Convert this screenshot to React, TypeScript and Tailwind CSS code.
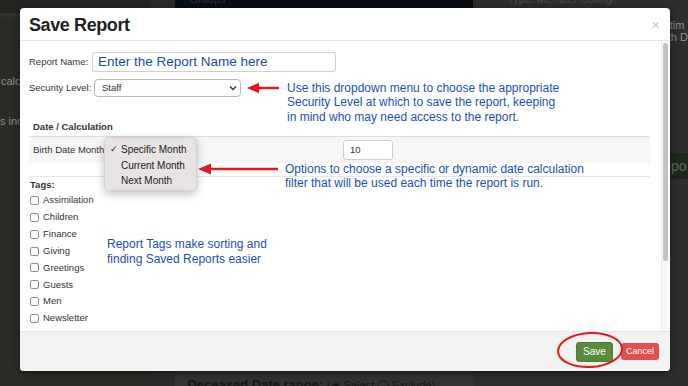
import React from "react";

const tags = ["Assimilation", "Children", "Finance", "Giving", "Greetings", "Guests", "Men", "Newsletter", "Outreach"];

export default function App() {
  return (
    <div className="relative w-[688px] h-[386px] overflow-hidden flex bg-[#2c2c2c] font-['Liberation_Sans',Arial,sans-serif]">
      {/* background page (dimmed) */}
      <div className="w-[153px] flex flex-col bg-[#2a2c28]">
        <div className="h-[13px] bg-[#232521]" />
        <div className="h-[4px] bg-[#30322e]" />
        <div className="mt-[57px] w-[20px] overflow-hidden pl-[1px] text-[11px] leading-[14px] text-[#8c8d88] whitespace-nowrap">calc</div>
        <div className="mt-[26px] w-[20px] overflow-hidden text-[11px] leading-[14px] text-[#8c8d88] whitespace-nowrap">s inc</div>
      </div>
      <div className="w-[25px] bg-[#2b2b2b]" />
      <div className="w-[302px] flex flex-col">
        <div className="h-[8px] bg-[#0a0e15] overflow-hidden">
          <div className="pl-[14px] -mt-[8px] text-[11px] leading-[14px] text-[#2c313a]">Groups</div>
        </div>
        <div className="flex-1 bg-[#333333] flex flex-col justify-end overflow-hidden">
          <div className="pl-[12px] -mb-[7px] whitespace-nowrap text-[13px] leading-[16px] text-[#161616]">
            <span className="font-bold">Deceased Date range:</span> <span className="text-[11px]">(◉ Select ◯ Exclude)</span>
          </div>
        </div>
      </div>
      <div className="flex-1 flex flex-col bg-[#2e2e2e]">
        <div className="h-[8px] overflow-hidden">
          <div className="pl-[34px] -mt-[8px] text-[11px] leading-[14px] text-[#4a4a4a]">Type: Member Listing</div>
        </div>
        <div className="mt-[11px] ml-[190px] overflow-hidden pl-[1px] text-[11px] leading-[12px] text-[#8f8f8f] whitespace-nowrap">l tim</div>
        <div className="ml-[190px] overflow-hidden pl-[1px] text-[11px] leading-[12px] text-[#8f8f8f] whitespace-nowrap">rth D</div>
        <div className="mt-[110px] h-[26px] bg-[#1c291b] flex items-center pl-[190px] overflow-hidden text-[14px] text-[#5f6b5c] whitespace-nowrap">epo</div>
      </div>

      {/* modal */}
      <div className="absolute left-[20px] top-[8px] w-[650px] h-[363px] bg-white rounded-[4px] shadow-[0_2px_8px_rgba(0,0,0,0.5)] flex flex-col overflow-hidden">
        <div className="h-[33px] border-b border-[#e5e5e5] flex items-center justify-between pl-[9px] pr-[10px]">
          <div className="text-[18px] font-bold text-[#222] tracking-[-0.4px] leading-[20px] pt-[1px]">Save Report</div>
          <div className="text-[15px] leading-[15px] text-[#c6c6c6]">×</div>
        </div>

        <div className="flex-1 min-h-0 flex">
          <div className="flex-1 overflow-hidden pl-[9px] pr-[11px] pt-[11px] text-[9.5px] text-[#333]">
            <div className="h-[20px] flex items-center">
              <span className="w-[63px] whitespace-nowrap">Report Name:</span>
              <div className="w-[244px] h-[20px] border border-[#cfcfcf] rounded-[3px] pl-[5px] flex items-center text-[13.5px] text-[#1b4aa8] whitespace-nowrap">
                Enter the Report Name here
              </div>
            </div>
            <div className="mt-[7px] h-[18px] flex items-center">
              <span className="w-[65px] whitespace-nowrap">Security Level:</span>
              <div className="w-[147px] h-[18px] border border-[#b9b9b9] rounded-[4px] pl-[7px] pr-[3px] flex items-center justify-between bg-[#fdfdfd]">
                <span>Staff</span>
                <svg width="8" height="6" viewBox="0 0 8 6">
                  <path d="M1 1.5 L4 4.5 L7 1.5" fill="none" stroke="#333" strokeWidth="1.4" />
                </svg>
              </div>
            </div>
            <div className="mt-[21px] h-[19px] border-b border-[#dedede] pl-[4px] flex items-center font-bold">Date / Calculation</div>
            <div className="h-[26px] bg-[#f6f6f6] flex items-center pl-[4px]">
              <span className="w-[310px] whitespace-nowrap">Birth Date Month</span>
              <div className="w-[50px] h-[20px] bg-white border border-[#cfcfcf] rounded-[3px] pl-[6px] flex items-center">10</div>
            </div>
            <div className="h-[14px] border-b border-[#e6e6e6]" />
            <div className="mt-[1px] h-[14px] pl-[1px] flex items-center font-bold">Tags:</div>
            {tags.map((t) => (
              <div key={t} className="h-[16.86px] flex items-center pl-[1px]">
                <div className="w-[9px] h-[9px] border border-[#8e8e8e] rounded-[2px] bg-white" />
                <span className="ml-[4px]">{t}</span>
              </div>
            ))}
          </div>
          <div className="w-[8px] mr-[1px] bg-[#f7f7f7] border-l border-[#ececec] pt-[2px] flex justify-center">
            <div className="w-[5px] h-[218px] rounded-full bg-[#c2c2c2]" />
          </div>
        </div>

        <div className="h-[40px] border-t border-[#e3e3e3] bg-[#f2f2f2] flex items-center justify-end pr-[11px] gap-[8px]">
          <div className="w-[37px] h-[20px] rounded-[3px] bg-[#5b8a3f] border border-[#4f7a36] flex items-center justify-center text-[10px] text-white">Save</div>
          <div className="w-[38px] h-[17px] rounded-[3px] bg-[#df5050] flex items-center justify-center text-[9px] text-white">Cancel</div>
        </div>

        {/* annotations */}
        <div className="absolute left-[267px] top-[73px] text-[12px] leading-[14.3px] text-[#1c4fb4] whitespace-nowrap">
          <div>Use this dropdown menu to choose the appropriate</div>
          <div>Security Level at which to save the report, keeping</div>
          <div>in mind who may need access to the report.</div>
        </div>
        <div className="absolute left-[265px] top-[154px] text-[12px] leading-[14px] text-[#1c4fb4] whitespace-nowrap">
          <div>Options to choose a specific or dynamic date calculation</div>
          <div>filter that will be used each time the report is run.</div>
        </div>
        <div className="absolute left-[87px] top-[229px] text-[12px] leading-[15px] text-[#1c4fb4] whitespace-nowrap">
          <div>Report Tags make sorting and</div>
          <div>finding Saved Reports easier</div>
        </div>

        <svg className="absolute left-[225px] top-[74px]" width="36" height="12" viewBox="0 0 36 12">
          <path d="M2 6 L14 0.8 L14 11.2 Z" fill="#e3191b" />
          <line x1="12" y1="6" x2="34" y2="6" stroke="#e3191b" strokeWidth="2.6" />
        </svg>
        <svg className="absolute left-[176px] top-[155px]" width="84" height="12" viewBox="0 0 84 12">
          <path d="M2 6 L15 0.5 L15 11.5 Z" fill="#e3191b" />
          <line x1="13" y1="6" x2="82" y2="6" stroke="#e3191b" strokeWidth="2.6" />
        </svg>

        {/* dropdown popup */}
        <div className="absolute left-[84px] top-[129px] w-[93px] h-[54px] rounded-[5px] bg-[#e7e3e3] border border-[#d4d0d0] shadow-[0_3px_8px_rgba(0,0,0,0.25)] pt-[4px] text-[10px] text-[#222]">
          <div className="h-[15.5px] flex items-center">
            <span className="w-[16px] pl-[5px] text-[9px] font-['DejaVu_Sans',sans-serif]">✓</span>
            <span>Specific Month</span>
          </div>
          <div className="h-[15.5px] flex items-center pl-[16px]">Current Month</div>
          <div className="h-[15.5px] flex items-center pl-[16px]">Next Month</div>
        </div>

        <svg className="absolute left-[535px] top-[322px]" width="70" height="40" viewBox="0 0 70 40">
          <ellipse cx="35" cy="20" rx="32" ry="17" fill="none" stroke="#e3191b" strokeWidth="2" transform="rotate(-3 35 20)" />
        </svg>
      </div>
    </div>
  );
}
